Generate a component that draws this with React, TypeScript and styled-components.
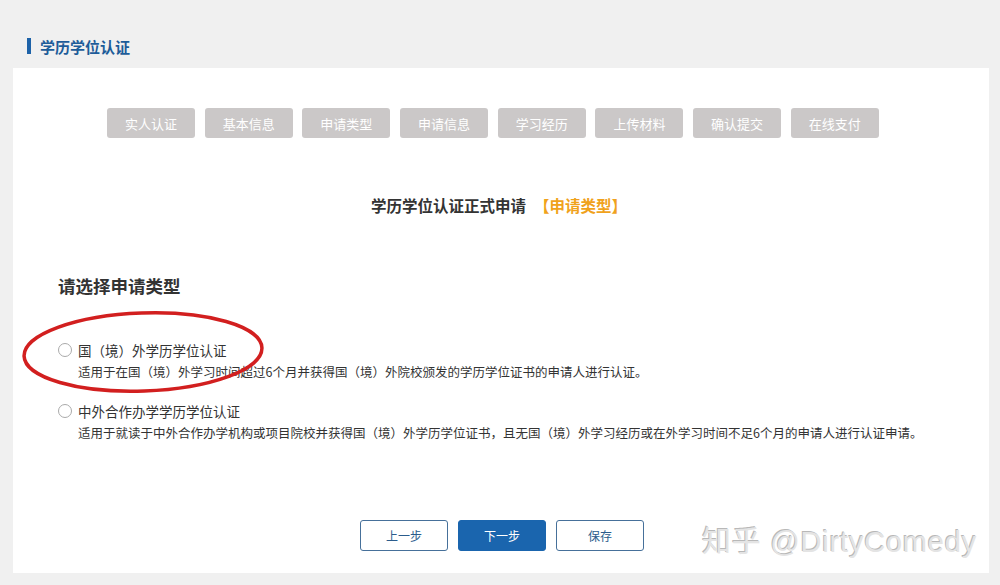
import styled, { createGlobalStyle } from "styled-components";

const GlobalStyle = createGlobalStyle`
  html, body {
    margin: 0;
    padding: 0;
    background: #f0f0f0;
    font-family: "Noto Sans CJK SC", "Liberation Sans", sans-serif;
  }
`;

const steps = ["实人认证", "基本信息", "申请类型", "申请信息", "学习经历", "上传材料", "确认提交", "在线支付"];

const options = [
  {
    title: "国（境）外学历学位认证",
    desc: "适用于在国（境）外学习时间超过6个月并获得国（境）外院校颁发的学历学位证书的申请人进行认证。",
  },
  {
    title: "中外合作办学学历学位认证",
    desc: "适用于就读于中外合作办学机构或项目院校并获得国（境）外学历学位证书，且无国（境）外学习经历或在外学习时间不足6个月的申请人进行认证申请。",
  },
];

const App: React.FC = () => {
  return (
    <Page>
      <GlobalStyle />
      <PageTitle>学历学位认证</PageTitle>
      <Panel>
        <StepBar>
          {steps.map((s) => (
            <Step key={s}>{s}</Step>
          ))}
        </StepBar>
        <FormTitle>
          学历学位认证正式申请<Highlight>【申请类型】</Highlight>
        </FormTitle>
        <SectionTitle>请选择申请类型</SectionTitle>
        <OptionList>
          {options.map((o) => (
            <Option key={o.title}>
              <OptionHead>
                <Radio />
                <span>{o.title}</span>
              </OptionHead>
              <OptionDesc>{o.desc}</OptionDesc>
            </Option>
          ))}
          <Circle viewBox="0 0 250 86">
            <ellipse
              cx="125"
              cy="43"
              rx="119"
              ry="39"
              transform="rotate(-2 125 43)"
              fill="none"
              stroke="#d21f1f"
              strokeWidth="3.5"
            />
          </Circle>
        </OptionList>
        <Actions>
          <ActionButton>上一步</ActionButton>
          <ActionButton $primary>下一步</ActionButton>
          <ActionButton>保存</ActionButton>
        </Actions>
        <Watermark>知乎 @DirtyComedy</Watermark>
      </Panel>
    </Page>
  );
};

export default App;

const Page = styled.div`
  width: 1000px;
  height: 585px;
  padding: 36px 11px 0 13px;
  box-sizing: border-box;
  overflow: hidden;
`;

const PageTitle = styled.div`
  display: flex;
  align-items: center;
  gap: 9px;
  margin-left: 14px;
  height: 20px;
  font-size: 15px;
  font-weight: 700;
  color: #1d5c99;
  &::before {
    content: "";
    width: 4px;
    height: 16px;
    background: #1d62a8;
  }
`;

const Panel = styled.div`
  position: relative;
  margin-top: 12px;
  height: 505px;
  background: #fff;
  display: flex;
  flex-direction: column;
`;

const StepBar = styled.div`
  display: flex;
  gap: 9.7px;
  margin: 40px 0 0 94px;
`;

const Step = styled.div`
  width: 88px;
  height: 30px;
  border-radius: 3px;
  background: #cbc8c8;
  color: #fff;
  font-size: 13px;
  display: flex;
  align-items: center;
  justify-content: center;
`;

const FormTitle = styled.div`
  margin-top: 56px;
  padding-right: 4px;
  text-align: center;
  font-size: 15.5px;
  font-weight: 700;
  color: #333;
  line-height: 22px;
`;

const Highlight = styled.span`
  color: #f0a21c;
  margin-left: 8px;
`;

const SectionTitle = styled.div`
  margin: 58px 0 0 45px;
  font-size: 17.5px;
  font-weight: 700;
  color: #333;
  line-height: 24px;
`;

const OptionList = styled.div`
  position: relative;
  margin: 43px 0 0 45px;
  display: flex;
  flex-direction: column;
  gap: 21px;
`;

const Option = styled.div`
  display: flex;
  flex-direction: column;
  gap: 3px;
`;

const OptionHead = styled.div`
  display: flex;
  align-items: center;
  gap: 6px;
  font-size: 13.5px;
  color: #333;
  line-height: 18px;
`;

const Radio = styled.span`
  width: 14px;
  height: 14px;
  border-radius: 50%;
  border: 1px solid #aaa;
  box-sizing: border-box;
  background: #fff;
`;

const OptionDesc = styled.div`
  margin-left: 20px;
  font-size: 12.5px;
  color: #333;
  line-height: 19px;
`;

const Circle = styled.svg`
  position: absolute;
  left: -40px;
  top: -32px;
  width: 250px;
  height: 86px;
  pointer-events: none;
`;

const Actions = styled.div`
  display: flex;
  gap: 10px;
  margin: 78px 0 0 347px;
`;

const ActionButton = styled.button<{ $primary?: boolean }>`
  width: 88px;
  height: 31px;
  border-radius: 3px;
  border: 1px solid ${(p) => (p.$primary ? "#1a65ae" : "#46709a")};
  background: ${(p) => (p.$primary ? "#1a65ae" : "#fff")};
  color: ${(p) => (p.$primary ? "#fff" : "#2b5c8c")};
  font-family: inherit;
  font-size: 12px;
  cursor: pointer;
`;

const Watermark = styled.div`
  position: absolute;
  right: 12px;
  bottom: 13px;
  font-family: "Liberation Sans", "Noto Sans CJK SC", sans-serif;
  font-size: 29px;
  color: #e4e4e4;
  text-shadow: -1px -1px 0 #b8b8b8, 1px 1px 0 #fff;
  letter-spacing: 0.8px;
`;
